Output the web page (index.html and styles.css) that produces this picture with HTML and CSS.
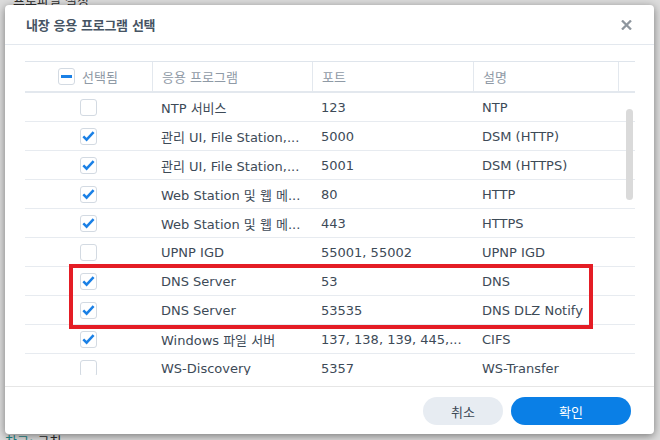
FILE: index.html
```html
<!DOCTYPE html>
<html lang="ko">
<head>
<meta charset="utf-8">
<title>내장 응용 프로그램 선택</title>
<link rel="stylesheet" href="styles.css">
</head>
<body>
<div class="bg-page">
  <div class="bg-top">프로파일 설정</div>
  <div class="bg-note"><span class="teal">참고:</span> 규칙</div>
</div>

<div class="dialog">
  <div class="dlg-head">
    <div class="dlg-title">내장 응용 프로그램 선택</div>
    <svg class="close" width="11" height="10" viewBox="0 0 11 10"><path d="M1 0.5 L10 9.5 M10 0.5 L1 9.5" stroke="#8e969e" stroke-width="2.3" fill="none"/></svg>
  </div>

  <div class="dlg-body">
    <div class="grid head">
      <div class="cell c-sel"><span class="cb cb-ind"><span class="ind-bar"></span></span><span>선택됨</span></div>
      <div class="cell">응용 프로그램</div>
      <div class="cell">포트</div>
      <div class="cell">설명</div>
      <div class="cell"></div>
    </div>
    <div class="viewport">
      <div class="grid row">
        <div class="cell c-check"><span class="cb"></span></div>
        <div class="cell">NTP 서비스</div><div class="cell">123</div><div class="cell">NTP</div>
      </div>
      <div class="grid row">
        <div class="cell c-check"><span class="cb"><svg viewBox="0 0 17 17"><path d="M3.3 8.3 L6.6 11.6 L13.6 4.2"/></svg></span></div>
        <div class="cell">관리 UI, File Station,...</div><div class="cell">5000</div><div class="cell">DSM (HTTP)</div>
      </div>
      <div class="grid row">
        <div class="cell c-check"><span class="cb"><svg viewBox="0 0 17 17"><path d="M3.3 8.3 L6.6 11.6 L13.6 4.2"/></svg></span></div>
        <div class="cell">관리 UI, File Station,...</div><div class="cell">5001</div><div class="cell">DSM (HTTPS)</div>
      </div>
      <div class="grid row">
        <div class="cell c-check"><span class="cb"><svg viewBox="0 0 17 17"><path d="M3.3 8.3 L6.6 11.6 L13.6 4.2"/></svg></span></div>
        <div class="cell">Web Station 및 웹 메...</div><div class="cell">80</div><div class="cell">HTTP</div>
      </div>
      <div class="grid row">
        <div class="cell c-check"><span class="cb"><svg viewBox="0 0 17 17"><path d="M3.3 8.3 L6.6 11.6 L13.6 4.2"/></svg></span></div>
        <div class="cell">Web Station 및 웹 메...</div><div class="cell">443</div><div class="cell">HTTPS</div>
      </div>
      <div class="grid row">
        <div class="cell c-check"><span class="cb"></span></div>
        <div class="cell">UPNP IGD</div><div class="cell">55001, 55002</div><div class="cell">UPNP IGD</div>
      </div>
      <div class="grid row">
        <div class="cell c-check"><span class="cb"><svg viewBox="0 0 17 17"><path d="M3.3 8.3 L6.6 11.6 L13.6 4.2"/></svg></span></div>
        <div class="cell">DNS Server</div><div class="cell">53</div><div class="cell">DNS</div>
      </div>
      <div class="grid row">
        <div class="cell c-check"><span class="cb"><svg viewBox="0 0 17 17"><path d="M3.3 8.3 L6.6 11.6 L13.6 4.2"/></svg></span></div>
        <div class="cell">DNS Server</div><div class="cell">53535</div><div class="cell">DNS DLZ Notify</div>
      </div>
      <div class="grid row">
        <div class="cell c-check"><span class="cb"><svg viewBox="0 0 17 17"><path d="M3.3 8.3 L6.6 11.6 L13.6 4.2"/></svg></span></div>
        <div class="cell">Windows 파일 서버</div><div class="cell">137, 138, 139, 445,...</div><div class="cell">CIFS</div>
      </div>
      <div class="grid row">
        <div class="cell c-check"><span class="cb"></span></div>
        <div class="cell">WS-Discovery</div><div class="cell">5357</div><div class="cell">WS-Transfer</div>
      </div>
      <div class="scrollbar"></div>
    </div>
  </div>

  <div class="dlg-foot">
    <button class="btn btn-cancel">취소</button>
    <button class="btn btn-ok">확인</button>
  </div>

  <div class="highlight"></div>
</div>
</body>
</html>
```

FILE: styles.css
```css
html, body {
  margin: 0;
  padding: 0;
}
body {
  width: 660px;
  height: 440px;
  overflow: hidden;
  background: #dcdcdc;
  font-family: "DejaVu Sans", "Noto Sans CJK KR", sans-serif;
  font-size: 13px;
  color: #3d4a57;
  position: relative;
}

.bg-page {
  height: 440px;
  display: flex;
  flex-direction: column;
  justify-content: space-between;
  padding: 0 5px;
  color: #2c2c2c;
  overflow: hidden;
}
.bg-top {
  margin-top: -10px;
  padding-left: 8px;
}
.bg-note {
  margin-bottom: -10px;
}
.bg-note .teal {
  color: #1f8a8a;
}

.dialog {
  position: absolute;
  left: 5px;
  top: 5px;
  width: 649px;
  height: 429px;
  background: #ffffff;
  border-radius: 4px;
  box-shadow: 0 2px 9px rgba(0, 0, 0, 0.45);
  display: flex;
  flex-direction: column;
}

.dlg-head {
  height: 39px;
  border-bottom: 1px solid #e3e8ee;
  display: flex;
  align-items: center;
  justify-content: space-between;
  padding: 0 22px 0 21px;
  flex: none;
}
.dlg-title {
  font-size: 13px;
  font-weight: bold;
  color: #465463;
  letter-spacing: -0.3px;
}
.close {
  display: block;
}

.dlg-body {
  flex: none;
  height: 341px;
  box-sizing: border-box;
  padding: 16px 19px 11px 20px;
}

.grid {
  display: grid;
  grid-template-columns: 127px 160px 161px 145px 17px;
}

.head {
  height: 32px;
  box-sizing: border-box;
  border-top: 1px solid #dfe5ec;
  border-bottom: 2px solid #e3e8ee;
  color: #8f9aa6;
}
.head .cell {
  border-left: 1px solid #e3e8ee;
}
.head .cell:first-child {
  border-left: none;
}
.cell {
  display: flex;
  align-items: center;
  padding-left: 9px;
  white-space: nowrap;
  overflow: hidden;
}
.c-sel {
  padding-left: 33px;
  gap: 7px;
}
.c-check {
  padding-left: 55px;
}

.viewport {
  position: relative;
  height: 282px;
  overflow: hidden;
}
.row {
  height: 29px;
  box-sizing: border-box;
  border-bottom: 1px solid #e7ebf0;
}
.row .cell {
  padding-top: 1px;
}
.row .c-check {
  padding-top: 0;
}

.cb {
  width: 17px;
  height: 17px;
  box-sizing: border-box;
  border: 1px solid #d3dae2;
  border-radius: 3px;
  background: #fff;
  display: flex;
  align-items: center;
  justify-content: center;
  flex: none;
}
.cb svg {
  width: 17px;
  height: 17px;
  flex: none;
}
.cb svg path {
  fill: none;
  stroke: #1a80e6;
  stroke-width: 2.5;
}
.ind-bar {
  width: 11px;
  height: 2.5px;
  background: #1a80e6;
}

.scrollbar {
  position: absolute;
  right: 2px;
  top: 16px;
  width: 7px;
  height: 91px;
  border-radius: 4px;
  background: #dadada;
}

.dlg-foot {
  flex: 1;
  border-top: 1px solid #e6e6e6;
  display: flex;
  justify-content: flex-end;
  align-items: flex-start;
  gap: 8px;
  padding: 10px 23px 0 0;
}
.btn {
  height: 28px;
  border: none;
  border-radius: 14px;
  font-family: "DejaVu Sans", "Noto Sans CJK KR", sans-serif;
  font-size: 13px;
  padding: 0;
  cursor: pointer;
}
.btn-cancel {
  width: 80px;
  background: #e7ecf2;
  color: #3b4856;
}
.btn-ok {
  width: 120px;
  background: #0a7fe6;
  color: #ffffff;
}

.highlight {
  position: absolute;
  left: 64px;
  top: 259px;
  width: 524px;
  height: 65px;
  box-sizing: border-box;
  border: 4px solid #e41d25;
  pointer-events: none;
}
```
